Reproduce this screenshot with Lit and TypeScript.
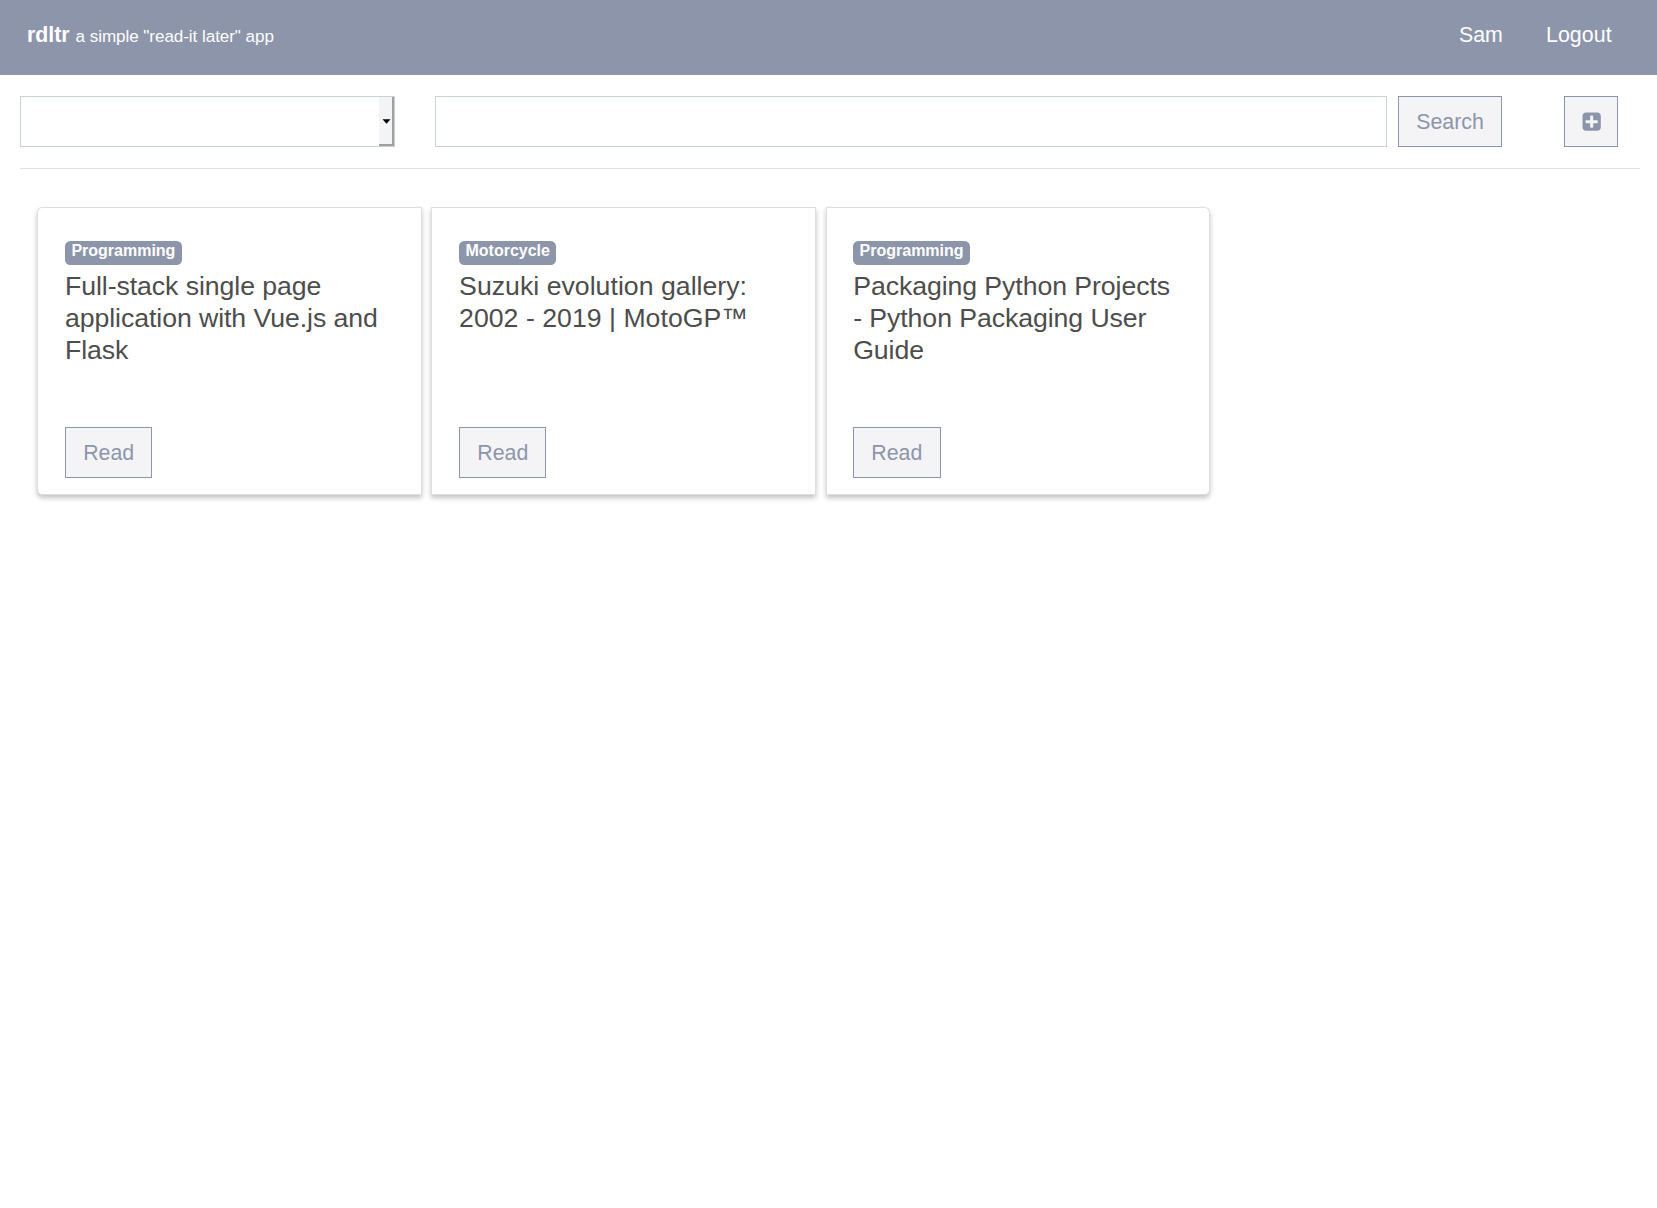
import { LitElement, html, css } from "lit";
import { customElement, property } from "lit/decorators.js";

@customElement("article-card")
class ArticleCard extends LitElement {
  @property() category = "";
  @property() heading = "";

  static styles = css`
    :host {
      box-sizing: border-box;
      display: flex;
      flex-direction: column;
      align-items: flex-start;
      width: 384.3px;
      height: 288px;
      padding: 33px 26.67px 16px;
      border: 1px solid rgba(0, 0, 0, 0.125);
      background: #fff;
      box-shadow: 0 3px 5px rgba(0, 0, 0, 0.24);
    }
    .badge {
      box-sizing: border-box;
      height: 24px;
      padding: 2px 6.4px 6px;
      border-radius: 5.33px;
      background: #8d95aa;
      color: #fff;
      font-size: 16px;
      font-weight: 700;
      line-height: 16px;
      white-space: nowrap;
    }
    .title {
      margin: 5px 0 0;
      color: #4d4d4d;
      font-size: 26.67px;
      font-weight: 400;
      line-height: 32px;
      letter-spacing: var(--title-spacing, -0.07px);
    }
    .read {
      box-sizing: border-box;
      width: 87.35px;
      height: 51px;
      margin-top: auto;
      padding: 0;
      border: 1px solid #8c95aa;
      background: #f4f4f7;
      color: #8d95aa;
      font: inherit;
    }
  `;

  render() {
    return html`
      <span class="badge">${this.category}</span>
      <h5 class="title">${this.heading}</h5>
      <button class="read">Read</button>
    `;
  }
}

@customElement("app-root")
class AppRoot extends LitElement {
  static styles = css`
    :host {
      display: block;
      min-height: 1208px;
      background: #fff;
      font-family: "Liberation Sans", Arial, sans-serif;
      font-size: 21.33px;
      line-height: 32px;
    }
    .header {
      box-sizing: border-box;
      display: flex;
      justify-content: space-between;
      height: 75px;
      padding: 19px 45.3px 0 27px;
      background: #8d95aa;
      color: #fff;
    }
    .brand {
      white-space: nowrap;
    }
    .tagline {
      font-size: 17.07px;
      letter-spacing: -0.06px;
    }
    .nav {
      display: flex;
      gap: 43px;
      letter-spacing: 0.08px;
    }
    .toolbar {
      box-sizing: border-box;
      display: flex;
      height: 94px;
      margin: 0 17px 0 20px;
      padding-top: 21px;
      border-bottom: 1px solid #e1e2e4;
    }
    .select,
    .input {
      box-sizing: border-box;
      height: 51px;
      border: 1px solid #cad1db;
      background: #fff;
    }
    .select {
      display: flex;
      justify-content: flex-end;
      width: 375px;
      margin-right: 40px;
    }
    .arrow {
      box-sizing: border-box;
      display: flex;
      align-items: center;
      justify-content: center;
      width: 15px;
      padding: 2px 0 0 1px;
      border: solid #a0a0a0;
      border-width: 0 2px 2px 0;
      background: #f4f4f7;
    }
    .input {
      width: 952px;
      margin-right: 11px;
      padding: 0 16px;
      border-radius: 0;
      font: inherit;
      outline: none;
    }
    .button {
      box-sizing: border-box;
      display: flex;
      align-items: center;
      justify-content: center;
      width: 104px;
      height: 51px;
      padding: 0;
      border: 1px solid #8c95aa;
      background: #f4f4f7;
      color: #8d95aa;
      font: inherit;
    }
    .add {
      width: 54px;
      margin-left: 62px;
      padding-left: 1px;
    }
    .cards {
      display: flex;
      gap: 9.8px;
      padding: 38px 37.33px;
    }
    .first {
      border-radius: 5.33px 0 0 5.33px;
    }
    .middle {
      --title-spacing: 0.02px;
    }
    .last {
      border-radius: 0 5.33px 5.33px 0;
    }
  `;

  render() {
    return html`
      <header class="header">
        <div class="brand"><strong>rdltr</strong> <span class="tagline">a simple "read-it later" app</span></div>
        <nav class="nav"><span>Sam</span><span>Logout</span></nav>
      </header>
      <div class="toolbar">
        <div class="select">
          <span class="arrow">
            <svg width="9" height="5" viewBox="0 0 9 5"><path d="M0.5 0.3h8L4.5 4.8z" fill="#000" /></svg>
          </span>
        </div>
        <input class="input" type="text" />
        <button class="button">Search</button>
        <button class="button add">
          <svg width="21.33" height="21.33" viewBox="0 0 1792 1792" fill="currentColor">
            <path d="M1408 960v-128q0-26-19-45t-45-19h-320v-320q0-26-19-45t-45-19h-128q-26 0-45 19t-19 45v320h-320q-26 0-45 19t-19 45v128q0 26 19 45t45 19h320v320q0 26 19 45t45 19h128q26 0 45-19t19-45v-320h320q26 0 45-19t19-45zm256-544v960q0 119-84.500 203.500t-203.500 84.500h-960q-119 0-203.500-84.500t-84.500-203.500v-960q0-119 84.500-203.500t203.500-84.500h960q119 0 203.500 84.500t84.500 203.500z" />
          </svg>
        </button>
      </div>
      <main class="cards">
        <article-card class="first" category="Programming" heading="Full-stack single page application with Vue.js and Flask"></article-card>
        <article-card class="middle" category="Motorcycle" heading="Suzuki evolution gallery: 2002 - 2019 | MotoGP™"></article-card>
        <article-card class="last" category="Programming" heading="Packaging Python Projects - Python Packaging User Guide"></article-card>
      </main>
    `;
  }
}
